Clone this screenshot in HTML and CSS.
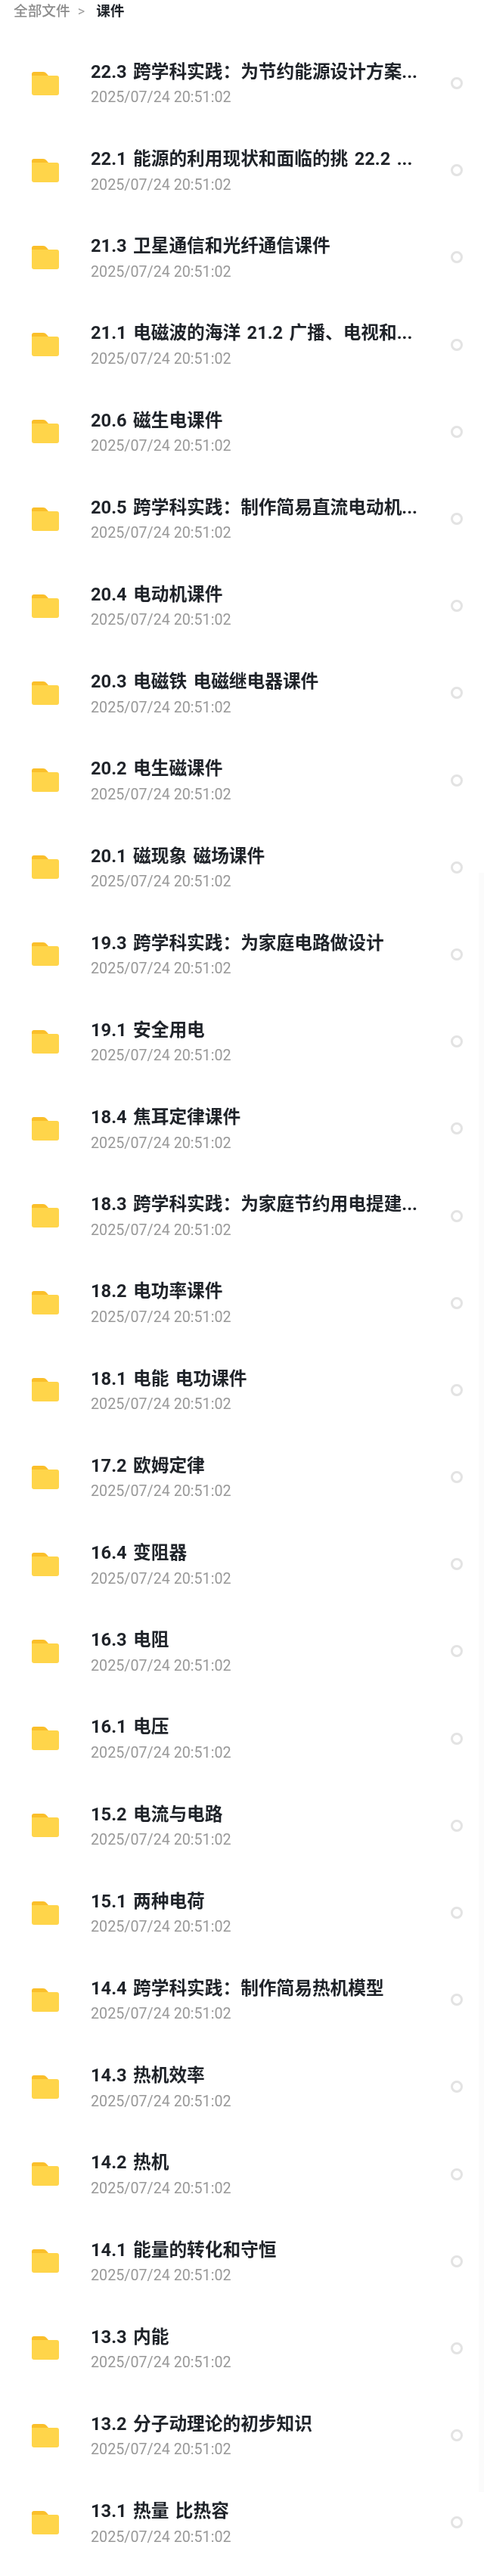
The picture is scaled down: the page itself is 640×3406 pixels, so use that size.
FILE: index.html
```html
<!DOCTYPE html>
<html lang="zh-CN">
<head>
<meta charset="utf-8">
<title>课件</title>
<link rel="stylesheet" href="styles.css">
</head>
<body>
<nav class="crumbs"><span class="crumb-root">全部文件</span><span class="crumb-sep">&gt;</span><span class="crumb-current">课件</span></nav>
<div class="scroll-track"></div>
<ul class="list">
<li class="row"><svg class="folder" viewBox="0 0 36 31"><path class="tab" d="M3 0h12c2 0 3 .8 4.500 2.200L22 5H0V3c0-2 1-3 3-3z"/><path class="body" d="M0 5h33c2 0 3 1 3 3v20c0 2-1 3-3 3H3c-2 0-3-1-3-3z"/></svg><div class="info"><div class="name">22.3 跨学科实践：为节约能源设计方案...</div><div class="time">2025/07/24 20:51:02</div></div><span class="radio"></span></li>
<li class="row"><svg class="folder" viewBox="0 0 36 31"><path class="tab" d="M3 0h12c2 0 3 .8 4.500 2.200L22 5H0V3c0-2 1-3 3-3z"/><path class="body" d="M0 5h33c2 0 3 1 3 3v20c0 2-1 3-3 3H3c-2 0-3-1-3-3z"/></svg><div class="info"><div class="name">22.1 能源的利用现状和面临的挑 22.2 ...</div><div class="time">2025/07/24 20:51:02</div></div><span class="radio"></span></li>
<li class="row"><svg class="folder" viewBox="0 0 36 31"><path class="tab" d="M3 0h12c2 0 3 .8 4.500 2.200L22 5H0V3c0-2 1-3 3-3z"/><path class="body" d="M0 5h33c2 0 3 1 3 3v20c0 2-1 3-3 3H3c-2 0-3-1-3-3z"/></svg><div class="info"><div class="name">21.3 卫星通信和光纤通信课件</div><div class="time">2025/07/24 20:51:02</div></div><span class="radio"></span></li>
<li class="row"><svg class="folder" viewBox="0 0 36 31"><path class="tab" d="M3 0h12c2 0 3 .8 4.500 2.200L22 5H0V3c0-2 1-3 3-3z"/><path class="body" d="M0 5h33c2 0 3 1 3 3v20c0 2-1 3-3 3H3c-2 0-3-1-3-3z"/></svg><div class="info"><div class="name">21.1 电磁波的海洋 21.2 广播、电视和...</div><div class="time">2025/07/24 20:51:02</div></div><span class="radio"></span></li>
<li class="row"><svg class="folder" viewBox="0 0 36 31"><path class="tab" d="M3 0h12c2 0 3 .8 4.500 2.200L22 5H0V3c0-2 1-3 3-3z"/><path class="body" d="M0 5h33c2 0 3 1 3 3v20c0 2-1 3-3 3H3c-2 0-3-1-3-3z"/></svg><div class="info"><div class="name">20.6 磁生电课件</div><div class="time">2025/07/24 20:51:02</div></div><span class="radio"></span></li>
<li class="row"><svg class="folder" viewBox="0 0 36 31"><path class="tab" d="M3 0h12c2 0 3 .8 4.500 2.200L22 5H0V3c0-2 1-3 3-3z"/><path class="body" d="M0 5h33c2 0 3 1 3 3v20c0 2-1 3-3 3H3c-2 0-3-1-3-3z"/></svg><div class="info"><div class="name">20.5 跨学科实践：制作简易直流电动机...</div><div class="time">2025/07/24 20:51:02</div></div><span class="radio"></span></li>
<li class="row"><svg class="folder" viewBox="0 0 36 31"><path class="tab" d="M3 0h12c2 0 3 .8 4.500 2.200L22 5H0V3c0-2 1-3 3-3z"/><path class="body" d="M0 5h33c2 0 3 1 3 3v20c0 2-1 3-3 3H3c-2 0-3-1-3-3z"/></svg><div class="info"><div class="name">20.4 电动机课件</div><div class="time">2025/07/24 20:51:02</div></div><span class="radio"></span></li>
<li class="row"><svg class="folder" viewBox="0 0 36 31"><path class="tab" d="M3 0h12c2 0 3 .8 4.500 2.200L22 5H0V3c0-2 1-3 3-3z"/><path class="body" d="M0 5h33c2 0 3 1 3 3v20c0 2-1 3-3 3H3c-2 0-3-1-3-3z"/></svg><div class="info"><div class="name">20.3 电磁铁 电磁继电器课件</div><div class="time">2025/07/24 20:51:02</div></div><span class="radio"></span></li>
<li class="row"><svg class="folder" viewBox="0 0 36 31"><path class="tab" d="M3 0h12c2 0 3 .8 4.500 2.200L22 5H0V3c0-2 1-3 3-3z"/><path class="body" d="M0 5h33c2 0 3 1 3 3v20c0 2-1 3-3 3H3c-2 0-3-1-3-3z"/></svg><div class="info"><div class="name">20.2 电生磁课件</div><div class="time">2025/07/24 20:51:02</div></div><span class="radio"></span></li>
<li class="row"><svg class="folder" viewBox="0 0 36 31"><path class="tab" d="M3 0h12c2 0 3 .8 4.500 2.200L22 5H0V3c0-2 1-3 3-3z"/><path class="body" d="M0 5h33c2 0 3 1 3 3v20c0 2-1 3-3 3H3c-2 0-3-1-3-3z"/></svg><div class="info"><div class="name">20.1 磁现象 磁场课件</div><div class="time">2025/07/24 20:51:02</div></div><span class="radio"></span></li>
<li class="row"><svg class="folder" viewBox="0 0 36 31"><path class="tab" d="M3 0h12c2 0 3 .8 4.500 2.200L22 5H0V3c0-2 1-3 3-3z"/><path class="body" d="M0 5h33c2 0 3 1 3 3v20c0 2-1 3-3 3H3c-2 0-3-1-3-3z"/></svg><div class="info"><div class="name">19.3 跨学科实践：为家庭电路做设计</div><div class="time">2025/07/24 20:51:02</div></div><span class="radio"></span></li>
<li class="row"><svg class="folder" viewBox="0 0 36 31"><path class="tab" d="M3 0h12c2 0 3 .8 4.500 2.200L22 5H0V3c0-2 1-3 3-3z"/><path class="body" d="M0 5h33c2 0 3 1 3 3v20c0 2-1 3-3 3H3c-2 0-3-1-3-3z"/></svg><div class="info"><div class="name">19.1 安全用电</div><div class="time">2025/07/24 20:51:02</div></div><span class="radio"></span></li>
<li class="row"><svg class="folder" viewBox="0 0 36 31"><path class="tab" d="M3 0h12c2 0 3 .8 4.500 2.200L22 5H0V3c0-2 1-3 3-3z"/><path class="body" d="M0 5h33c2 0 3 1 3 3v20c0 2-1 3-3 3H3c-2 0-3-1-3-3z"/></svg><div class="info"><div class="name">18.4 焦耳定律课件</div><div class="time">2025/07/24 20:51:02</div></div><span class="radio"></span></li>
<li class="row"><svg class="folder" viewBox="0 0 36 31"><path class="tab" d="M3 0h12c2 0 3 .8 4.500 2.200L22 5H0V3c0-2 1-3 3-3z"/><path class="body" d="M0 5h33c2 0 3 1 3 3v20c0 2-1 3-3 3H3c-2 0-3-1-3-3z"/></svg><div class="info"><div class="name">18.3 跨学科实践：为家庭节约用电提建...</div><div class="time">2025/07/24 20:51:02</div></div><span class="radio"></span></li>
<li class="row"><svg class="folder" viewBox="0 0 36 31"><path class="tab" d="M3 0h12c2 0 3 .8 4.500 2.200L22 5H0V3c0-2 1-3 3-3z"/><path class="body" d="M0 5h33c2 0 3 1 3 3v20c0 2-1 3-3 3H3c-2 0-3-1-3-3z"/></svg><div class="info"><div class="name">18.2 电功率课件</div><div class="time">2025/07/24 20:51:02</div></div><span class="radio"></span></li>
<li class="row"><svg class="folder" viewBox="0 0 36 31"><path class="tab" d="M3 0h12c2 0 3 .8 4.500 2.200L22 5H0V3c0-2 1-3 3-3z"/><path class="body" d="M0 5h33c2 0 3 1 3 3v20c0 2-1 3-3 3H3c-2 0-3-1-3-3z"/></svg><div class="info"><div class="name">18.1 电能 电功课件</div><div class="time">2025/07/24 20:51:02</div></div><span class="radio"></span></li>
<li class="row"><svg class="folder" viewBox="0 0 36 31"><path class="tab" d="M3 0h12c2 0 3 .8 4.500 2.200L22 5H0V3c0-2 1-3 3-3z"/><path class="body" d="M0 5h33c2 0 3 1 3 3v20c0 2-1 3-3 3H3c-2 0-3-1-3-3z"/></svg><div class="info"><div class="name">17.2 欧姆定律</div><div class="time">2025/07/24 20:51:02</div></div><span class="radio"></span></li>
<li class="row"><svg class="folder" viewBox="0 0 36 31"><path class="tab" d="M3 0h12c2 0 3 .8 4.500 2.200L22 5H0V3c0-2 1-3 3-3z"/><path class="body" d="M0 5h33c2 0 3 1 3 3v20c0 2-1 3-3 3H3c-2 0-3-1-3-3z"/></svg><div class="info"><div class="name">16.4 变阻器</div><div class="time">2025/07/24 20:51:02</div></div><span class="radio"></span></li>
<li class="row"><svg class="folder" viewBox="0 0 36 31"><path class="tab" d="M3 0h12c2 0 3 .8 4.500 2.200L22 5H0V3c0-2 1-3 3-3z"/><path class="body" d="M0 5h33c2 0 3 1 3 3v20c0 2-1 3-3 3H3c-2 0-3-1-3-3z"/></svg><div class="info"><div class="name">16.3 电阻</div><div class="time">2025/07/24 20:51:02</div></div><span class="radio"></span></li>
<li class="row"><svg class="folder" viewBox="0 0 36 31"><path class="tab" d="M3 0h12c2 0 3 .8 4.500 2.200L22 5H0V3c0-2 1-3 3-3z"/><path class="body" d="M0 5h33c2 0 3 1 3 3v20c0 2-1 3-3 3H3c-2 0-3-1-3-3z"/></svg><div class="info"><div class="name">16.1 电压</div><div class="time">2025/07/24 20:51:02</div></div><span class="radio"></span></li>
<li class="row"><svg class="folder" viewBox="0 0 36 31"><path class="tab" d="M3 0h12c2 0 3 .8 4.500 2.200L22 5H0V3c0-2 1-3 3-3z"/><path class="body" d="M0 5h33c2 0 3 1 3 3v20c0 2-1 3-3 3H3c-2 0-3-1-3-3z"/></svg><div class="info"><div class="name">15.2 电流与电路</div><div class="time">2025/07/24 20:51:02</div></div><span class="radio"></span></li>
<li class="row"><svg class="folder" viewBox="0 0 36 31"><path class="tab" d="M3 0h12c2 0 3 .8 4.500 2.200L22 5H0V3c0-2 1-3 3-3z"/><path class="body" d="M0 5h33c2 0 3 1 3 3v20c0 2-1 3-3 3H3c-2 0-3-1-3-3z"/></svg><div class="info"><div class="name">15.1 两种电荷</div><div class="time">2025/07/24 20:51:02</div></div><span class="radio"></span></li>
<li class="row"><svg class="folder" viewBox="0 0 36 31"><path class="tab" d="M3 0h12c2 0 3 .8 4.500 2.200L22 5H0V3c0-2 1-3 3-3z"/><path class="body" d="M0 5h33c2 0 3 1 3 3v20c0 2-1 3-3 3H3c-2 0-3-1-3-3z"/></svg><div class="info"><div class="name">14.4 跨学科实践：制作简易热机模型</div><div class="time">2025/07/24 20:51:02</div></div><span class="radio"></span></li>
<li class="row"><svg class="folder" viewBox="0 0 36 31"><path class="tab" d="M3 0h12c2 0 3 .8 4.500 2.200L22 5H0V3c0-2 1-3 3-3z"/><path class="body" d="M0 5h33c2 0 3 1 3 3v20c0 2-1 3-3 3H3c-2 0-3-1-3-3z"/></svg><div class="info"><div class="name">14.3 热机效率</div><div class="time">2025/07/24 20:51:02</div></div><span class="radio"></span></li>
<li class="row"><svg class="folder" viewBox="0 0 36 31"><path class="tab" d="M3 0h12c2 0 3 .8 4.500 2.200L22 5H0V3c0-2 1-3 3-3z"/><path class="body" d="M0 5h33c2 0 3 1 3 3v20c0 2-1 3-3 3H3c-2 0-3-1-3-3z"/></svg><div class="info"><div class="name">14.2 热机</div><div class="time">2025/07/24 20:51:02</div></div><span class="radio"></span></li>
<li class="row"><svg class="folder" viewBox="0 0 36 31"><path class="tab" d="M3 0h12c2 0 3 .8 4.500 2.200L22 5H0V3c0-2 1-3 3-3z"/><path class="body" d="M0 5h33c2 0 3 1 3 3v20c0 2-1 3-3 3H3c-2 0-3-1-3-3z"/></svg><div class="info"><div class="name">14.1 能量的转化和守恒</div><div class="time">2025/07/24 20:51:02</div></div><span class="radio"></span></li>
<li class="row"><svg class="folder" viewBox="0 0 36 31"><path class="tab" d="M3 0h12c2 0 3 .8 4.500 2.200L22 5H0V3c0-2 1-3 3-3z"/><path class="body" d="M0 5h33c2 0 3 1 3 3v20c0 2-1 3-3 3H3c-2 0-3-1-3-3z"/></svg><div class="info"><div class="name">13.3 内能</div><div class="time">2025/07/24 20:51:02</div></div><span class="radio"></span></li>
<li class="row"><svg class="folder" viewBox="0 0 36 31"><path class="tab" d="M3 0h12c2 0 3 .8 4.500 2.200L22 5H0V3c0-2 1-3 3-3z"/><path class="body" d="M0 5h33c2 0 3 1 3 3v20c0 2-1 3-3 3H3c-2 0-3-1-3-3z"/></svg><div class="info"><div class="name">13.2 分子动理论的初步知识</div><div class="time">2025/07/24 20:51:02</div></div><span class="radio"></span></li>
<li class="row"><svg class="folder" viewBox="0 0 36 31"><path class="tab" d="M3 0h12c2 0 3 .8 4.500 2.200L22 5H0V3c0-2 1-3 3-3z"/><path class="body" d="M0 5h33c2 0 3 1 3 3v20c0 2-1 3-3 3H3c-2 0-3-1-3-3z"/></svg><div class="info"><div class="name">13.1 热量 比热容</div><div class="time">2025/07/24 20:51:02</div></div><span class="radio"></span></li>
</ul>
</body>
</html>
```
FILE: styles.css
```css
* { box-sizing: border-box; }
html, body { margin: 0; padding: 0; background: #fff; }
body {
  position: relative;
  height: 3406px;
  overflow: hidden;
  font-family: "Roboto", "Noto Sans CJK SC", sans-serif;
  filter: blur(0.45px);
}
.crumbs {
  display: flex;
  align-items: center;
  height: 30px;
  padding-left: 18px;
  font-size: 18.7px;
  line-height: 30px;
}
.crumb-root { color: #8c8c8c; font-weight: 500; }
.crumb-sep { color: #a0a0a0; margin: 0 15px 0 10px; font-size: 18px; }
.crumb-current { color: #1f2329; font-weight: 700; }
.scroll-track {
  position: absolute;
  top: 1154px;
  right: 0;
  height: 2141px;
  width: 7px;
  background: #fbfbfb;
}
.list {
  list-style: none;
  margin: 0;
  padding: 22.5px 0 0;
}
.row {
  display: flex;
  align-items: center;
  height: 115.2px;
  padding-left: 42px;
}
.folder { width: 36px; height: 31px; flex: none; }
.tab { fill: #fabf2a; }
.body { fill: #ffd54a; }
.info { margin-left: 42px; width: 440px; }
.name {
  color: #1f2329;
  font-size: 23.7px;
  font-weight: 700;
  line-height: 32px;
  white-space: nowrap;
  word-spacing: 2.5px;
}
.time {
  margin-top: 6.5px;
  color: #999;
  font-size: 19.7px;
  line-height: 24px;
  white-space: nowrap;
}
.radio {
  width: 16px;
  height: 16px;
  margin-left: 36px;
  border: 3px solid #e3e3e3;
  border-radius: 50%;
  flex: none;
}
```
